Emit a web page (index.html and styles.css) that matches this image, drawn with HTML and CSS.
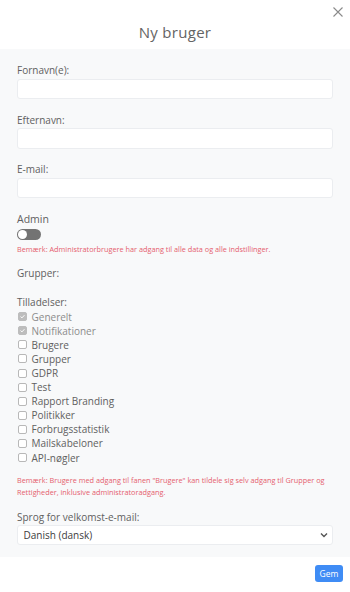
FILE: index.html
```html
<!DOCTYPE html>
<html lang="da">
<head>
<meta charset="utf-8">
<title>Ny bruger</title>
<link rel="stylesheet" href="styles.css">
</head>
<body>
<div class="modal">
  <div class="header">
    <h1 class="title">Ny bruger</h1>
    <button class="close" aria-label="Luk">
      <svg width="10" height="10" viewBox="0 0 10 10"><path d="M0.5 0.5 L9.5 9.5 M9.5 0.5 L0.5 9.5" stroke="#8a8a8a" stroke-width="1.1" fill="none"/></svg>
    </button>
  </div>
  <div class="body">
    <div class="group">
      <label class="label">Fornavn(e):</label>
      <input class="input" type="text">
    </div>
    <div class="group">
      <label class="label">Efternavn:</label>
      <input class="input" type="text">
    </div>
    <div class="group">
      <label class="label">E-mail:</label>
      <input class="input" type="text">
    </div>
    <div class="admin">
      <div class="label label-lg">Admin</div>
      <div class="toggle"><span class="knob"></span></div>
      <div class="note">Bemærk: Administratorbrugere har adgang til alle data og alle indstillinger.</div>
    </div>
    <div class="label groups">Grupper:</div>
    <div class="label perms">Tilladelser:</div>
    <ul class="checks">
      <li class="check disabled"><span class="box checked"><svg width="9" height="9" viewBox="0 0 9 9"><path d="M2 4.6 L3.8 6.3 L7 2.8" stroke="#fff" stroke-width="1.2" fill="none"/></svg></span>Generelt</li>
      <li class="check disabled"><span class="box checked"><svg width="9" height="9" viewBox="0 0 9 9"><path d="M2 4.6 L3.8 6.3 L7 2.8" stroke="#fff" stroke-width="1.2" fill="none"/></svg></span>Notifikationer</li>
      <li class="check"><span class="box"></span>Brugere</li>
      <li class="check"><span class="box"></span>Grupper</li>
      <li class="check"><span class="box"></span>GDPR</li>
      <li class="check"><span class="box"></span>Test</li>
      <li class="check"><span class="box"></span>Rapport Branding</li>
      <li class="check"><span class="box"></span>Politikker</li>
      <li class="check"><span class="box"></span>Forbrugsstatistik</li>
      <li class="check"><span class="box"></span>Mailskabeloner</li>
      <li class="check"><span class="box"></span>API-nøgler</li>
    </ul>
    <div class="note note2">Bemærk: Brugere med adgang til fanen "Brugere" kan tildele sig selv adgang til Grupper og Rettigheder, inklusive administratoradgang.</div>
    <div class="group last">
      <label class="label">Sprog for velkomst-e-mail:</label>
      <div class="select">
        <span>Danish (dansk)</span>
        <svg width="8" height="6" viewBox="0 0 8 6"><path d="M1 1.5 L4 4.5 L7 1.5" stroke="#555" stroke-width="1.4" fill="none"/></svg>
      </div>
    </div>
  </div>
  <div class="footer">
    <button class="save">Gem</button>
  </div>
</div>
</body>
</html>
```
FILE: styles.css
```css
* { box-sizing: border-box; }
html, body { margin: 0; padding: 0; background: #fff; }
body {
  font-family: "Open Sans", "Noto Sans", "Liberation Sans", sans-serif;
  color: #606060;
  width: 350px;
  height: 592px;
  overflow: hidden;
}
.modal { width: 350px; }
.header {
  position: relative;
  height: 49px;
  display: flex;
  align-items: center;
  justify-content: center;
}
.title {
  margin: 0;
  padding-top: 15px;
  font-size: 15px;
  font-weight: 400;
  color: #646464;
  letter-spacing: 0.3px;
}
.close {
  position: absolute;
  top: 6px;
  right: 6px;
  width: 12px;
  height: 12px;
  padding: 0;
  border: 0;
  background: none;
  display: flex;
  align-items: center;
  justify-content: center;
}
.body {
  background: #f8f9fa;
  padding: 14px 17px 12px 17px;
}
.group { margin-bottom: 13.5px; display: flex; flex-direction: column; }
.group.last { margin-bottom: 0; }
.label {
  display: block;
  font-size: 10px;
  line-height: 15px;
  color: #606060;
  margin-bottom: 0.5px;
}
.label-lg { font-size: 10.5px; }
.input {
  display: block;
  width: 100%;
  height: 20.5px;
  background: #fff;
  border: 1px solid #ebedf0;
  border-radius: 3px;
  margin: 0;
}
.toggle {
  margin-top: 2px;
  width: 24px;
  height: 11px;
  border-radius: 6px;
  background: #737373;
  position: relative;
}
.knob {
  position: absolute;
  left: 1px;
  top: 1px;
  width: 9px;
  height: 9px;
  border-radius: 50%;
  background: #fff;
}
.note {
  margin-top: 3px;
  font-size: 7.3px;
  line-height: 12.6px;
  color: #e5606e;
}
.groups { margin-top: 11px; }
.perms { margin-top: 13.5px; margin-bottom: 0; }
.checks { list-style: none; margin: 0; padding: 0; }
.check {
  display: flex;
  align-items: center;
  height: 14.1px;
  font-size: 10px;
  color: #606060;
}
.check.disabled { color: #8c8c8c; }
.box {
  width: 9px;
  height: 9px;
  border: 1px solid #b8b8b8;
  border-radius: 2px;
  background: #fff;
  margin-right: 5px;
  margin-left: 0.5px;
  flex: none;
  display: flex;
  align-items: center;
  justify-content: center;
}
.box.checked { background: #bdbdbd; border-color: #bdbdbd; }
.box svg { display: block; }
.note2 { margin-top: 9px; margin-bottom: 11px; }
.select {
  height: 20px;
  background: #fff;
  border: 1px solid #ebedf0;
  border-radius: 3px;
  display: flex;
  align-items: center;
  justify-content: space-between;
  padding: 0 4px 0 5.5px;
  font-size: 10px;
  color: #3c3c3c;
}
.footer {
  height: 33px;
  display: flex;
  justify-content: flex-end;
  align-items: flex-start;
  padding: 8px 7px 0 0;
}
.save {
  width: 28px;
  height: 17px;
  padding: 0;
  border: 0;
  border-radius: 3px;
  background: #3f8cf5;
  color: #fff;
  font-family: "Open Sans", "Noto Sans", sans-serif;
  font-size: 8.5px;
  line-height: 17px;
}
```
